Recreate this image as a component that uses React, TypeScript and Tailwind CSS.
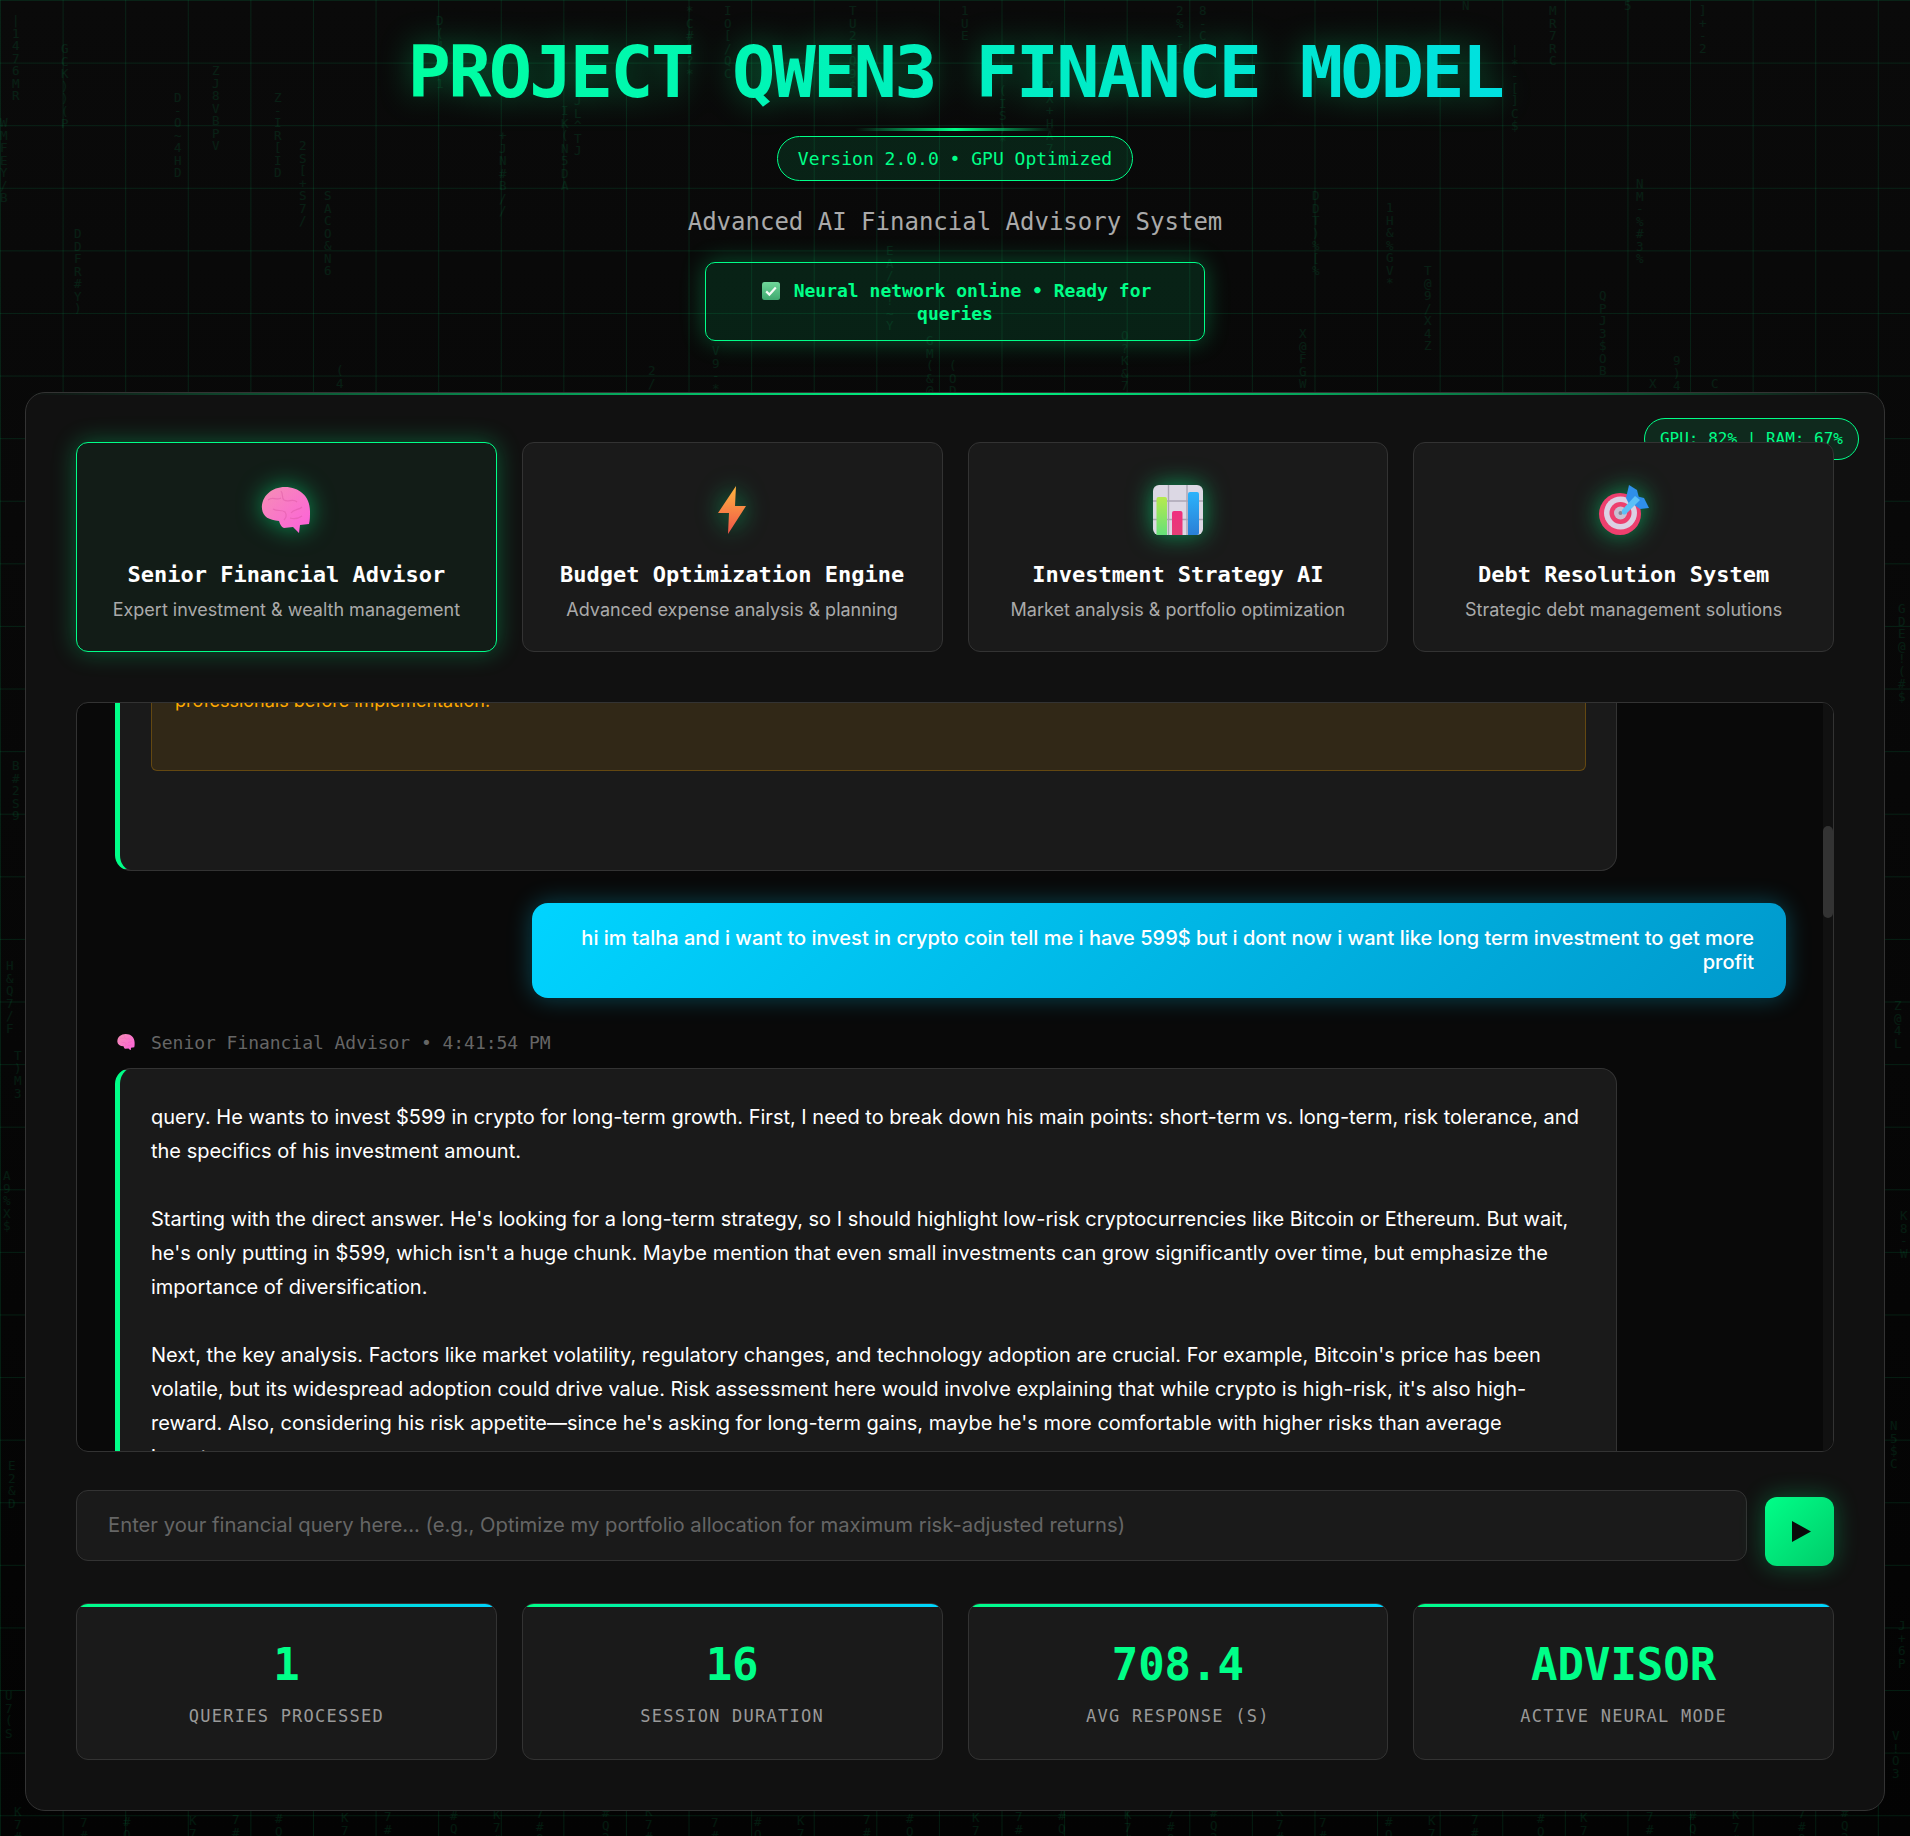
const mono = "font-['DejaVu_Sans_Mono',monospace]";

// faint falling characters behind the panel: [left, top, chars]
const rain: [number, number, string][] = [
  [12, 15, "|1476MR"], [61, 43, "GCK))(P"], [0, 117, "WMFEY/B"], [174, 92, "D-O~4HD"], [212, 65, "ZJ8VBPV"],
  [274, 92, "Z-IR[ID"], [299, 140, "2S[+S7/"], [324, 190, "SACO&N6"], [74, 228, "DDFR#Y)"], [436, 15, "D(4X/1"],
  [499, 130, "+JN#B//"], [561, 105, "IK(N5DA"], [574, 95, "JL^TJ"], [336, 365, "(4"],
  [686, 5, "*C#Z?*"], [724, 5, "IO[/QC"], [849, 5, "TU20Q9$"], [961, 5, "1UE"], [1176, 5, "2%-I"], [1199, 5, "8-C"],
  [999, 85, "(IS)*"], [1046, 80, "YX+HA7"], [886, 245, "EA/8!~Y"], [926, 335, "GM(&@"], [949, 360, "(OD"],
  [1121, 330, "O?K&71"], [712, 345, "V9-*"], [648, 365, "2/"],
  [1462, 0, "N"], [1549, 5, "MR7RC"], [1624, 0, "5"], [1699, 5, "]+-2"], [1511, 45, "|*-[]C$"],
  [1312, 190, "DDT)%[%"], [1386, 202, "1H&%GV*"], [1424, 265, "T@9/X4Z"], [1636, 178, "NM-%#3%"],
  [1599, 290, "QPJ3$OB"], [1299, 328, "X@FGW"], [1673, 355, "9)4"], [1649, 378, "X"], [1711, 378, "C"],
  [1898, 603, "GDE@!(#$"], [12, 760, "B#2S9"], [6, 960, "H&Q7/F"],
  [14, 1050, "T)M3"], [3, 1170, "A9%X$"], [1894, 1000, "Z@4L"], [1900, 1210, "K8-W"], [1890, 1420, "N5$C"],
  [8, 1460, "E2&D"], [1898, 1620, "J+6P"], [1892, 1730, "V!O3"], [5, 1690, "U7(S"],
];
for (let i = 0; i < 36; i++) {
  rain.push([14 + i * 52 + (i * 37) % 23, 1806 + (i * 11) % 12, "K7#Q2X".slice(i % 3)]);
}

const Check = () => (
  <svg viewBox="0 0 18 18" className="inline-block w-[18px] h-[18px] ml-[3px] mr-[14px] align-[-3px]">
    <defs>
      <linearGradient id="chk" x1="0" y1="0" x2="0" y2="1">
        <stop offset="0" stopColor="#6fd79a" />
        <stop offset="1" stopColor="#3fa86f" />
      </linearGradient>
    </defs>
    <rect width="18" height="18" rx="2.5" fill="url(#chk)" />
    <path d="M4.2 9.4l3.2 3.2 6.4-7" fill="none" stroke="#f4fbf6" strokeWidth="2.2" />
  </svg>
);

const Brain = ({ size = 50, id = "br" }: { size?: number; id?: string }) => (
  <svg viewBox="0 0 50 46" width={size} height={(size * 46) / 50} className="block">
    <defs>
      <linearGradient id={id} x1="0" y1="0" x2="1" y2="1">
        <stop offset="0" stopColor="#f58fb4" />
        <stop offset="1" stopColor="#fd5fdc" />
      </linearGradient>
    </defs>
    <path
      d="M1 22C0 9 11 0 24 0c14 0 25 9 25 24 0 5 0 9-1 13l-9 1-1 8-6-6-9 1c-3-1-4-4-5-7C8 33 2 30 1 22z"
      fill={`url(#${id})`}
    />
    <path
      d="M7 13c5-4 8 1 13-2M20 4c3 4 0 6 3 9 4 3 9-2 13 2M30 26c3-4 8-3 11-6M12 22c5 3 8 0 12 3 2 3 1 6-1 8M29 31c4 1 8 1 12-2"
      fill="none"
      stroke="#d9559f"
      strokeWidth="1.2"
      opacity="0.45"
    />
  </svg>
);

const Bolt = () => (
  <svg viewBox="0 0 28 48" className="block w-[28px] h-[48px]">
    <defs>
      <linearGradient id="blt" x1="0" y1="0" x2="0" y2="1">
        <stop offset="0" stopColor="#ffb63f" />
        <stop offset="1" stopColor="#ef5349" />
      </linearGradient>
    </defs>
    <path d="M18 0 L0 27 L11 27 L10 48 L28 20 L17 20 Z" fill="url(#blt)" />
  </svg>
);

const BarChart = () => (
  <svg viewBox="0 0 50 50" className="block w-[50px] h-[50px]">
    <defs>
      <linearGradient id="g1" x1="0" y1="0" x2="0" y2="1">
        <stop offset="0" stopColor="#b6ea4d" />
        <stop offset="1" stopColor="#66e07a" />
      </linearGradient>
      <linearGradient id="g2" x1="0" y1="0" x2="0" y2="1">
        <stop offset="0" stopColor="#ef2f7f" />
        <stop offset="1" stopColor="#e53e76" />
      </linearGradient>
      <linearGradient id="g3" x1="0" y1="0" x2="0" y2="1">
        <stop offset="0" stopColor="#2cb3fb" />
        <stop offset="1" stopColor="#2a7fd6" />
      </linearGradient>
    </defs>
    <rect width="50" height="50" rx="6" fill="#dcd8e4" />
    <path d="M15.5 0v50M34 0v50M0 16h50M0 34.5h50" stroke="#aaa5b4" strokeWidth="1.4" />
    <path d="M3.5 14a2 2 0 012-2h6.500a2 2 0 012 2v36h-10.500z" fill="url(#g1)" />
    <path d="M19 28a2 2 0 012-2h6.500a2 2 0 012 2v22h-10.500z" fill="url(#g2)" />
    <path d="M35 9a2 2 0 012-2h7a2 2 0 012 2v39a2 2 0 01-2 2h-9z" fill="url(#g3)" />
  </svg>
);

const Target = () => (
  <svg viewBox="0 0 50 50" className="block w-[50px] h-[50px]">
    <circle cx="21" cy="29" r="21" fill="#ee3f6e" />
    <circle cx="21.500" cy="28" r="16.500" fill="#dcd1e4" />
    <circle cx="21.500" cy="28" r="11" fill="#ee3f6e" />
    <circle cx="21.500" cy="28" r="6.500" fill="#c9bfd2" />
    <circle cx="21.500" cy="28" r="2" fill="#8b8494" />
    <path d="M30 0 L38 5 L40 13 L31 21 L27 13z" fill="#2f8fea" />
    <path d="M50 23 L41 24 L34 19 L37 11 L45 13z" fill="#2f8fea" />
    <path d="M23 25 L36 11 L41 15 L27 29 Q22 31 23 25z" fill="#5cc0f7" />
  </svg>
);

const Play = () => (
  <svg viewBox="0 0 19 21" className="block w-[19px] h-[21px]">
    <path d="M0 0 L19 10.500 L0 21 Z" fill="#0a0a0a" />
  </svg>
);

const modes = [
  { icon: <Brain id="br1" />, title: "Senior Financial Advisor", desc: "Expert investment & wealth management", active: true },
  { icon: <Bolt />, title: "Budget Optimization Engine", desc: "Advanced expense analysis & planning" },
  { icon: <BarChart />, title: "Investment Strategy AI", desc: "Market analysis & portfolio optimization" },
  { icon: <Target />, title: "Debt Resolution System", desc: "Strategic debt management solutions" },
];

const stats = [
  { value: "1", label: "QUERIES PROCESSED" },
  { value: "16", label: "SESSION DURATION" },
  { value: "708.4", label: "AVG RESPONSE (S)" },
  { value: "ADVISOR", label: "ACTIVE NEURAL MODE" },
];

const paragraphs = [
  "query. He wants to invest $599 in crypto for long-term growth. First, I need to break down his main points: short-term vs. long-term, risk tolerance, and the specifics of his investment amount.",
  "Starting with the direct answer. He's looking for a long-term strategy, so I should highlight low-risk cryptocurrencies like Bitcoin or Ethereum. But wait, he's only putting in $599, which isn't a huge chunk. Maybe mention that even small investments can grow significantly over time, but emphasize the importance of diversification.",
  "Next, the key analysis. Factors like market volatility, regulatory changes, and technology adoption are crucial. For example, Bitcoin's price has been volatile, but its widespread adoption could drive value. Risk assessment here would involve explaining that while crypto is high-risk, it's also high-reward. Also, considering his risk appetite—since he's asking for long-term gains, maybe he's more comfortable with higher risks than average investors.",
];

export default function App() {
  return (
    <div className="relative min-h-screen overflow-hidden bg-[linear-gradient(180deg,#0a0a0a,#030303)] font-['Inter',sans-serif] text-white">
      <div className="absolute inset-0 bg-[linear-gradient(rgba(0,255,136,0.1)_1px,transparent_1px),linear-gradient(90deg,rgba(0,255,136,0.1)_1px,transparent_1px)] bg-[size:62.6px_62.6px]" />
      <div className={`absolute inset-0 text-[12.5px] leading-[12.5px] text-[#00ff88]/[0.09] ${mono}`}>
        {rain.map(([x, y, chars], i) => (
          <div key={i} className="absolute" style={{ left: x, top: y }}>
            {chars.split("").map((c, j) => (
              <div key={j}>{c}</div>
            ))}
          </div>
        ))}
      </div>

      <div className="relative">
        <header className="flex flex-col items-center pt-[28px]">
          <h1
            className={`bg-[linear-gradient(100deg,#00ffa0,#00e0e0)] bg-clip-text text-[72px] font-bold leading-[88px] tracking-[-2.8px] text-transparent drop-shadow-[0_0_16px_rgba(0,255,136,0.35)] ${mono}`}
          >
            PROJECT QWEN3 FINANCE MODEL
          </h1>
          <div className="mt-[12px] h-[3px] w-[200px] bg-[linear-gradient(90deg,transparent,#00ff88,transparent)]" />
          <div
            className={`mt-[5px] flex h-[45px] items-center rounded-full border border-[#00ff88] bg-[#00ff88]/10 px-[20px] text-[18px] text-[#00ff88] ${mono}`}
          >
            Version 2.0.0 • GPU Optimized
          </div>
          <p className={`mt-[26px] text-[24px] leading-[30px] text-[#aaaaaa] ${mono}`}>
            Advanced AI Financial Advisory System
          </p>
          <div
            className={`mt-[25px] h-[79px] w-[500px] rounded-[10px] border border-[#00ff88] bg-[#00ff88]/10 px-[32px] py-[16px] text-center text-[18px] font-bold leading-[23px] text-[#00ff88] shadow-[0_0_25px_rgba(0,255,136,0.3)] ${mono}`}
          >
            <Check />
            Neural network online • Ready for queries
          </div>
        </header>

        <main className="relative mx-[25px] mb-[26px] mt-[51px] rounded-[20px] border border-[#333333] bg-[#111111] px-[50px] pb-[50px] pt-[49px]">
          <div className="absolute inset-x-0 top-0 h-[2px] bg-[linear-gradient(90deg,transparent,#00ff88,transparent)]" />
          <div
            className={`absolute right-[25px] top-[25px] flex h-[42px] items-center rounded-full border border-[#00ff88] bg-[#00ff88]/10 px-[15px] text-[16px] text-[#00ff88] ${mono}`}
          >
            GPU: 82% | RAM: 67%
          </div>

          <section className="relative grid grid-cols-4 gap-[25px]">
            {modes.map((m) => (
              <div
                key={m.title}
                className={`flex h-[210px] flex-col items-center rounded-[12px] border pt-[42px] ${
                  m.active
                    ? "border-[#00ff88] bg-[#121c17] shadow-[0_0_25px_rgba(0,255,136,0.3)]"
                    : "border-[#333333] bg-[#1a1a1a]"
                }`}
              >
                <div className="flex h-[50px] items-center justify-center drop-shadow-[0_0_12px_rgba(0,255,136,0.55)]">
                  {m.icon}
                </div>
                <div className={`mt-[26px] text-[22px] font-bold leading-[28px] ${mono}`}>{m.title}</div>
                <div className="mt-[10px] text-[18px] leading-[22px] text-[#aaaaaa]">{m.desc}</div>
              </div>
            ))}
          </section>

          <section className="relative mt-[50px] h-[750px] overflow-hidden rounded-[12px] border border-[#333333] bg-[#090909] pl-[38px] pr-[47px]">
            <div className="absolute bottom-0 right-0 top-0 w-[10px] bg-[#111111]">
              <div className="mt-[123px] h-[92px] rounded-[5px] bg-[#333333]" />
            </div>

            <div className="-mt-[60px] h-[228px] w-[1502px] rounded-[16px] border border-l-[5px] border-[#333333] border-l-[#00ff88] bg-[#1a1a1a] pl-[31px] pr-[30px] pt-[30px]">
              <div className="h-[97px] rounded-[6px] border border-[#ffaa00]/25 bg-[#ffaa00]/10 px-[23px] pt-[14px] text-[18px] leading-[24px] text-[#ffaa00]">
                professionals before implementation.
              </div>
            </div>

            <div className="ml-auto mt-[32px] w-[1254px] rounded-[16px] bg-[linear-gradient(135deg,#00d4ff,#0099cc)] px-[32px] pb-[24px] pt-[23px] text-right text-[20px] font-medium leading-[24px] shadow-[0_0_25px_rgba(0,212,255,0.3)]">
              hi im talha and i want to invest in crypto coin tell me i have 599$ but i dont now i want like long term investment to get more profit
            </div>

            <div className={`mt-[32px] flex h-[24px] items-center text-[18px] tracking-[-0.04px] text-[#666666] ${mono}`}>
              <span className="ml-[2px] mr-[16px]">
                <Brain size={18} id="br2" />
              </span>
              Senior Financial Advisor • 4:41:54 PM
            </div>

            <div className="mt-[14px] w-[1502px] rounded-[16px] border border-l-[5px] border-[#333333] border-l-[#00ff88] bg-[#1a1a1a] pb-[30px] pl-[31px] pr-[30px] pt-[31px] text-[20px] leading-[34px] text-white">
              {paragraphs.map((p, i) => (
                <p key={i} className={i > 0 ? "mt-[34px]" : ""}>
                  {p}
                </p>
              ))}
            </div>
          </section>

          <section className="mt-[38px] flex gap-[18px]">
            <input
              placeholder="Enter your financial query here... (e.g., Optimize my portfolio allocation for maximum risk-adjusted returns)"
              className="h-[71px] flex-1 rounded-[12px] border border-[#333333] bg-[#1a1a1a] pb-[2px] pl-[31px] text-[20.250px] text-white outline-none placeholder:text-[#666666]"
            />
            <button className="mt-[7px] flex h-[69px] w-[69px] items-center justify-center rounded-[12px] bg-[linear-gradient(135deg,#00ff88,#00cc6a)] pl-[3px] shadow-[0_0_25px_rgba(0,255,136,0.3)]">
              <Play />
            </button>
          </section>

          <section className="mt-[37px] grid grid-cols-4 gap-[25px]">
            {stats.map((s) => (
              <div
                key={s.label}
                className="relative flex h-[157px] flex-col items-center overflow-hidden rounded-[12px] border border-[#333333] bg-[#1a1a1a] pt-[39px]"
              >
                <div className="absolute inset-x-0 top-0 h-[3px] bg-[linear-gradient(90deg,#00ff88,#00d4ff)]" />
                <div className={`text-[44px] font-bold leading-[44px] text-[#00ff88] ${mono}`}>{s.value}</div>
                <div className={`mt-[19px] text-[17px] leading-[20px] tracking-[1.25px] text-[#999999] ${mono}`}>
                  {s.label}
                </div>
              </div>
            ))}
          </section>
        </main>
      </div>
    </div>
  );
}
